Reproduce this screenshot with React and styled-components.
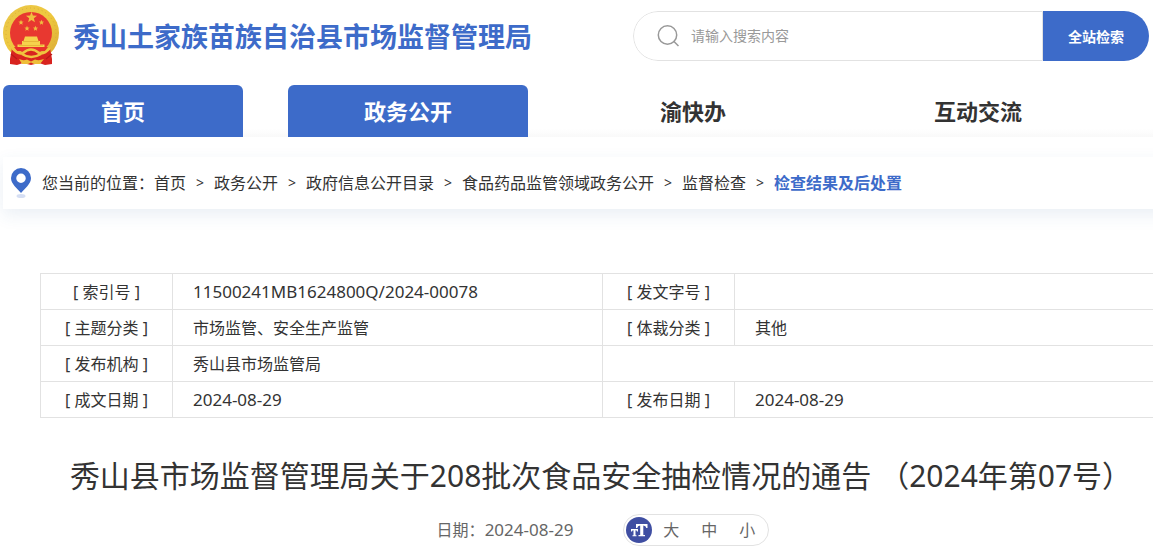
import React from "react";
import styled, { createGlobalStyle } from "styled-components";

const BLUE = "#3d6bc9";
const LINE = "#e2e2e2";

const GlobalStyle = createGlobalStyle`
  * { box-sizing: border-box; }
  body {
    margin: 0;
    background: #fff;
    color: #333;
    font: 16px/24px "Noto Sans", "Noto Sans CJK SC", sans-serif;
    overflow-x: hidden;
  }
  a { color: inherit; text-decoration: none; }
`;

const Page = styled.div`
  min-width: 1203px;
  padding-left: 3px;
`;

const Masthead = styled.header`
  display: flex;
  justify-content: space-between;
  align-items: flex-start;
  margin-right: 54px;
  padding-top: 5px;
  height: 85px;
`;

const Brand = styled.a`
  display: flex;
  align-items: center;
  gap: 13px;
`;

const SiteName = styled.h1`
  margin: 0;
  padding-top: 2px;
  color: ${BLUE};
  font-size: 27px;
  line-height: 40px;
  font-weight: 700;
`;

const SearchForm = styled.form`
  display: flex;
  width: 516px;
  height: 50px;
  margin-top: 6px;
  border-radius: 25px;
  overflow: hidden;
`;

const SearchField = styled.label`
  flex: 1;
  display: flex;
  align-items: center;
  gap: 10px;
  padding-left: 23px;
  border: 1px solid ${LINE};
  border-radius: 25px 0 0 25px;
`;

const SearchInput = styled.input`
  flex: 1;
  border: 0;
  outline: 0;
  padding: 0;
  background: none;
  font: inherit;
  font-size: 14px;
  color: #333;
  &::placeholder { color: #999; opacity: 1; }
`;

const SearchButton = styled.button`
  width: 106px;
  border: 0;
  padding: 2px 0 0;
  background: ${BLUE};
  color: #fff;
  font: inherit;
  font-size: 14px;
  font-weight: 700;
`;

const MainNav = styled.nav`
  display: flex;
  gap: 45px;
  background: linear-gradient(#fff 84%, #f9f9f9);
`;

const NavItem = styled.a`
  width: 240px;
  height: 52px;
  border-radius: 6px 6px 0 0;
  background: ${(p) => (p.$active ? BLUE : "transparent")};
  color: ${(p) => (p.$active ? "#fff" : "#333")};
  font-size: 22px;
  line-height: 52px;
  font-weight: 700;
  text-align: center;
`;

const Crumbs = styled.nav`
  display: flex;
  align-items: center;
  height: 52px;
  margin-top: 20px;
  padding-left: 8px;
  background: #fff;
  box-shadow: 0 6px 16px rgba(50, 100, 160, 0.1);
`;

const CrumbLabel = styled.span`
  margin-left: 11px;
`;

const CrumbArrow = styled.span`
  width: 28px;
  text-align: center;
  font-size: 14px;
`;

const Crumb = styled.a`
  color: ${(p) => (p.$current ? BLUE : "inherit")};
  font-weight: ${(p) => (p.$current ? 700 : 400)};
`;

const Article = styled.main`
  padding: 64px 37px 0;
`;

const MetaTable = styled.table`
  width: 100%;
  table-layout: fixed;
  border-collapse: collapse;
`;

const LabelCol = styled.col`
  width: 132px;
`;

const ValueCol = styled.col`
  width: 430px;
`;

const MetaLabel = styled.th`
  height: 36px;
  padding: 0;
  border: 1px solid ${LINE};
  font-weight: 400;
  text-align: center;
`;

const MetaValue = styled.td`
  height: 36px;
  padding: 0 20px;
  border: 1px solid ${LINE};
  font-size: ${(p) => (p.$numeric ? 17 : 16)}px;
`;

const Title = styled.h2`
  margin: 34px 0 0;
  padding-right: 4px;
  font-size: 30px;
  line-height: 48px;
  font-weight: 400;
  text-align: center;
  white-space: nowrap;
`;

const Byline = styled.div`
  display: flex;
  justify-content: center;
  align-items: center;
  gap: 50px;
  margin-top: 14px;
  color: #666;
`;

const ByDate = styled.time`
  font-size: 17px;
`;

const SizePicker = styled.div`
  display: flex;
  align-items: center;
  width: 146px;
  height: 32px;
  padding-left: 2px;
  border: 1px solid ${LINE};
  border-radius: 16px;
`;

const SizeButton = styled.button`
  width: 38px;
  padding: 0;
  border: 0;
  background: none;
  color: inherit;
  font: inherit;
`;

const Star = ({ x, y, r }) => {
  const points = Array.from({ length: 10 }, (_, i) => {
    const a = (Math.PI / 5) * i - Math.PI / 2;
    const d = i % 2 ? r * 0.42 : r;
    return `${x + d * Math.cos(a)},${y + d * Math.sin(a)}`;
  }).join(" ");
  return <polygon points={points} fill="#f0c040" />;
};

const Emblem = () => (
  <svg width="57" height="61" viewBox="0 0 57 61" role="img" aria-label="国徽">
    <defs>
      <linearGradient id="gold" x1="0" y1="0" x2="1" y2="1">
        <stop offset="0" stopColor="#e9c64a" />
        <stop offset="0.5" stopColor="#efc93f" />
        <stop offset="1" stopColor="#d9a935" />
      </linearGradient>
    </defs>
    <circle cx="28" cy="28" r="28" fill="url(#gold)" />
    <circle cx="28" cy="28" r="25" fill="none" stroke="#d8ae3a" strokeWidth="1" strokeDasharray="1 3" />
    <circle cx="28" cy="28" r="21" fill="#e83830" />
    <Star x={28.5} y={12.5} r={5.8} />
    <Star x={18} y={17.5} r={2.8} />
    <Star x={38.5} y={17.5} r={2.8} />
    <Star x={24} y={23.5} r={2.8} />
    <Star x={32.5} y={23.5} r={2.8} />
    <path d="M22 31.500H34L35.500 36H37V39.500H41.500V42H14.500V39.500H19V36H20.500Z" fill="#f6d24c" />
    <path d="M20 36.500H36M16 40.500H40" stroke="#e5ae35" strokeWidth="0.800" />
    <path d="M9 43Q14 50 20 47Q24 44 28 44Q32 44 36 47Q42 50 47 43L49 54V59L42 60L36 58L28 60L20 58L14 60L7 59V54Z" fill="#d8231f" />
    <path d="M11 42H45L42 46H35Q28 42 21 46H14Z" fill="#e7332b" />
    <path d="M9 43Q15 50 20 48Q24 44.500 28 44.500Q32 44.500 36 48Q41 50 47 43" fill="none" stroke="#f0c43f" strokeWidth="2.500" />
    <path d="M19 49Q28 55 38 49" fill="none" stroke="#f0c43f" strokeWidth="2.500" />
    <path d="M16 54Q20 56 24 54.500L28 56.500L32 54.500Q36 56 41 54L37 59H31L28 57.500L25 59H19Z" fill="#eebe3a" />
    <path d="M8 49L14 54M49 49L43 54" stroke="#b91917" strokeWidth="1.200" />
  </svg>
);

const SearchIcon = () => (
  <svg width="24" height="24" viewBox="0 0 24 24" fill="none" stroke="#999" strokeWidth="1.500" aria-hidden="true">
    <circle cx="10.500" cy="11" r="9.200" />
    <path d="M16.500 17L21.500 22" />
  </svg>
);

const PinIcon = () => (
  <svg width="20" height="30" viewBox="0 0 20 30" aria-hidden="true">
    <ellipse cx="10" cy="28" rx="4.500" ry="2" fill="#d5def3" />
    <path
      d="M10 0A10 10 0 0 1 20 10C20 16 14 20 10 25C6 20 0 16 0 10A10 10 0 0 1 10 0ZM10 5.500A4.700 4.700 0 1 0 10 15A4.700 4.700 0 1 0 10 5.500Z"
      fill={BLUE}
      fillRule="evenodd"
    />
  </svg>
);

const SizeIcon = () => (
  <svg width="26" height="26" viewBox="0 0 26 26" aria-hidden="true">
    <circle cx="13" cy="13" r="13" fill="#3f4ea2" />
    <path
      d="M10 7H21.500V11H20.300Q20 8.500 17.300 8.500V18H19V19.200H12.500V18H14.200V8.500Q11.500 8.500 11.200 11H10Z"
      fill="#fff"
    />
    <path d="M5 12H12V14.500H11Q11 13.200 9.500 13.200V18.200H10.500V19.200H6.500V18.200H7.500V13.200Q6 13.200 6 14.500H5Z" fill="#fff" />
  </svg>
);

const NAV = [
  { text: "首页", active: true },
  { text: "政务公开", active: true },
  { text: "渝快办" },
  { text: "互动交流" },
];

const CRUMBS = ["首页", "政务公开", "政府信息公开目录", "食品药品监管领域政务公开", "监督检查", "检查结果及后处置"];

const META = [
  ["索引号", "11500241MB1624800Q/2024-00078", "发文字号", ""],
  ["主题分类", "市场监管、安全生产监管", "体裁分类", "其他"],
  ["发布机构", "秀山县市场监管局"],
  ["成文日期", "2024-08-29", "发布日期", "2024-08-29"],
];

const isNumeric = (value) => /^\d/.test(value);

export default function App() {
  return (
    <Page lang="zh-CN">
      <GlobalStyle />
      <Masthead>
        <Brand href="#">
          <Emblem />
          <SiteName>秀山土家族苗族自治县市场监督管理局</SiteName>
        </Brand>
        <SearchForm role="search" onSubmit={(e) => e.preventDefault()}>
          <SearchField>
            <SearchIcon />
            <SearchInput type="text" placeholder="请输入搜索内容" aria-label="请输入搜索内容" />
          </SearchField>
          <SearchButton type="submit">全站检索</SearchButton>
        </SearchForm>
      </Masthead>
      <MainNav>
        {NAV.map((n) => (
          <NavItem key={n.text} href="#" $active={n.active}>
            {n.text}
          </NavItem>
        ))}
      </MainNav>
      <Crumbs>
        <PinIcon />
        <CrumbLabel>您当前的位置：</CrumbLabel>
        {CRUMBS.map((c, i) => (
          <React.Fragment key={c}>
            {i > 0 && <CrumbArrow>&gt;</CrumbArrow>}
            <Crumb href="#" $current={i === CRUMBS.length - 1}>
              {c}
            </Crumb>
          </React.Fragment>
        ))}
      </Crumbs>
      <Article>
        <MetaTable>
          <colgroup>
            <LabelCol />
            <ValueCol />
            <LabelCol />
            <col />
          </colgroup>
          <tbody>
            {META.map(([label, value, label2, value2]) => (
              <tr key={label}>
                <MetaLabel scope="row">[ {label} ]</MetaLabel>
                <MetaValue $numeric={isNumeric(value)}>{value}</MetaValue>
                {label2 ? (
                  <>
                    <MetaLabel scope="row">[ {label2} ]</MetaLabel>
                    <MetaValue $numeric={isNumeric(value2)}>{value2}</MetaValue>
                  </>
                ) : (
                  <MetaValue colSpan={2} />
                )}
              </tr>
            ))}
          </tbody>
        </MetaTable>
        <Title>秀山县市场监督管理局关于208批次食品安全抽检情况的通告 （2024年第07号）</Title>
        <Byline>
          <span>
            日期：<ByDate>2024-08-29</ByDate>
          </span>
          <SizePicker role="group" aria-label="字号">
            <SizeIcon />
            <SizeButton type="button">大</SizeButton>
            <SizeButton type="button">中</SizeButton>
            <SizeButton type="button">小</SizeButton>
          </SizePicker>
        </Byline>
      </Article>
    </Page>
  );
}
